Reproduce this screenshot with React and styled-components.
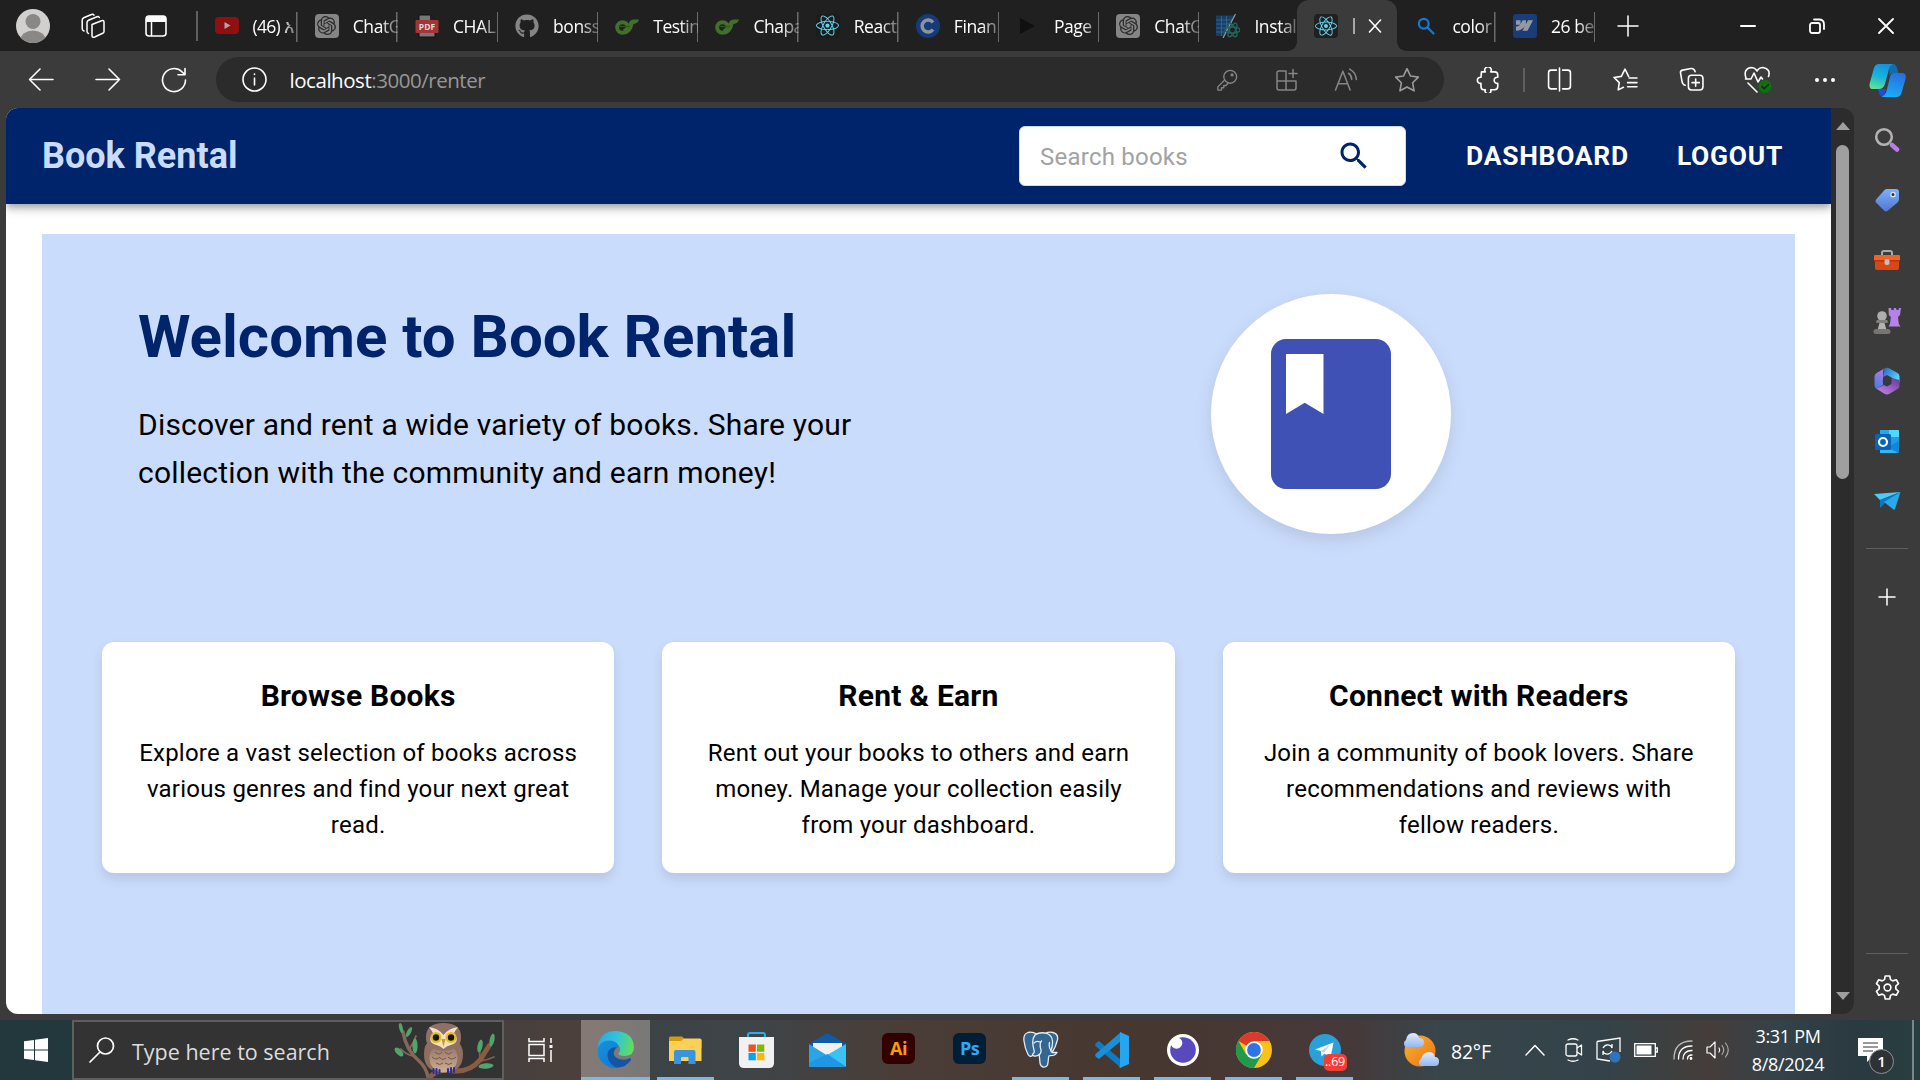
import React from "react";
import styled, { createGlobalStyle, css } from "styled-components";
import { FaReact, FaGithub } from "react-icons/fa";
import { SiOpenai, SiWebflow } from "react-icons/si";

const GlobalStyle = createGlobalStyle`
  * { box-sizing: border-box; }
  body { margin: 0; overflow: hidden; background: #3b3b3b; }
  h1, h2, p { margin: 0; }
  svg { display: block; flex: none; }
`;

const uiFont = `"Open Sans", "Noto Sans", sans-serif`;

const Screen = styled.div`
  width: 1920px;
  height: 1080px;
  display: flex;
  flex-direction: column;
  background: #3b3b3b;
  font-family: ${uiFont};
  overflow: hidden;
`;

/* ---------- title bar ---------- */
const TitleBar = styled.div`
  height: 51px;
  flex: none;
  display: flex;
  background: #202020;
  color: #fff;
`;
const Cell = styled.div`
  width: ${(p) => p.$w}px;
  height: ${(p) => (p.$h ? p.$h + "px" : "100%")};
  flex: none;
  display: flex;
  align-items: center;
  justify-content: ${(p) => (p.$end ? "flex-end" : "center")};
`;
const Tab = styled.div`
  width: ${(p) => p.$w || 100.3}px;
  height: 51px;
  flex: none;
  display: flex;
  align-items: center;
  padding-left: 17px;
  gap: 14px;
  ${(p) =>
    p.$line &&
    css`
      background: linear-gradient(#6b6b6b, #6b6b6b) right 0 top 12px / 1.5px 30px no-repeat;
    `}
`;
const Favicon = styled.div`
  width: 24px;
  height: 24px;
  flex: none;
  display: flex;
  align-items: center;
  justify-content: center;
  border-radius: ${(p) => p.$r || 0}px;
  background: ${(p) => p.$bg || "transparent"};
  color: ${(p) => p.$c || "#fff"};
`;
const TabLabel = styled.span`
  flex: 1;
  min-width: 0;
  white-space: nowrap;
  overflow: hidden;
  font-size: 17.5px;
  line-height: 26px;
  letter-spacing: ${(p) => p.$ls ?? -0.7}px;
  mask-image: linear-gradient(90deg, #000 calc(100% - 18px), rgba(0, 0, 0, 0.25));
`;
const ActiveTab = styled.div`
  width: 100px;
  height: 51px;
  flex: none;
  display: flex;
  align-items: center;
  background: #3b3b3b;
  border-radius: 12px 12px 0 0;
  padding-left: 17px;
  position: relative;
  &::before,
  &::after {
    content: "";
    position: absolute;
    bottom: 0;
    width: 9px;
    height: 9px;
  }
  &::before {
    left: -9px;
    background: radial-gradient(circle at 0 0, transparent 8.5px, #3b3b3b 9px);
  }
  &::after {
    right: -9px;
    background: radial-gradient(circle at 100% 0, transparent 8.5px, #3b3b3b 9px);
  }
`;
const ClippedLetter = styled.span`
  width: 2px;
  height: 16px;
  margin: 0 13px 0 15px;
  background: #a8a8a8;
`;
const Controls = styled.div`
  margin-left: auto;
  display: flex;
`;

/* ---------- toolbar ---------- */
const Toolbar = styled.div`
  height: 57px;
  flex: none;
  display: flex;
  align-items: center;
  padding-left: 8px;
  background: #3b3b3b;
`;
const AddressBar = styled.div`
  width: 1228px;
  height: 45px;
  margin: 0 11px 0 8px;
  border-radius: 23px;
  background: #2b2b2b;
  display: flex;
  align-items: center;
  padding: 0 7px 0 4px;
`;
const Url = styled.div`
  flex: 1;
  font-size: 20.5px;
  line-height: 30px;
  letter-spacing: -0.46px;
  color: #979797;
  b { font-weight: 400; color: #fff; }
`;
const Divider = styled.div`
  width: ${(p) => p.$w}px;
  height: ${(p) => p.$h}px;
  flex: none;
  background: #606060;
`;

/* ---------- body ---------- */
const Body = styled.div`
  height: 912px;
  flex: none;
  display: flex;
  padding-left: 6px;
`;
const Page = styled.main`
  width: 1825px;
  height: 906px;
  flex: none;
  overflow: hidden;
  border-radius: 12px 0 0 12px;
  background: #fff;
  font-family: Roboto, sans-serif;
`;
const ScrollTrack = styled.div`
  width: 23px;
  height: 906px;
  flex: none;
  background: #2c2c2c;
  border-radius: 0 12px 12px 0;
  display: flex;
  flex-direction: column;
  align-items: center;
  padding: 14px 0;
`;
const Arrow = styled.div`
  width: 0;
  height: 0;
  border: 7.5px solid transparent;
  ${(p) =>
    p.$down
      ? css`border-top: 8px solid #9f9f9f; border-bottom: 0; margin-top: auto;`
      : css`border-bottom: 8px solid #9f9f9f; border-top: 0;`}
`;
const Thumb = styled.div`
  width: 13px;
  height: 334px;
  margin-top: 15px;
  border-radius: 7px;
  background: #9f9f9f;
`;
const Sidebar = styled.aside`
  width: 66px;
  height: 912px;
  flex: none;
  display: flex;
  flex-direction: column;
  align-items: center;
  padding-top: 2px;
`;
const Spacer = styled.div`
  flex: 1;
`;

/* ---------- web app ---------- */
const AppHeader = styled.header`
  height: 96px;
  display: flex;
  align-items: center;
  padding: 0 48px 0 36px;
  background: #00246b;
  position: relative;
  box-shadow: 0 3px 6px -1.5px rgba(0, 0, 0, 0.2), 0 6px 7.5px rgba(0, 0, 0, 0.14),
    0 1.5px 15px rgba(0, 0, 0, 0.12);
`;
const Brand = styled.div`
  flex: 1;
  font-size: 36px;
  font-weight: 700;
  line-height: 48px;
  color: #cadcfc;
`;
const SearchBox = styled.div`
  width: 387px;
  height: 60px;
  display: flex;
  align-items: center;
  justify-content: space-between;
  padding: 0 33px 0 20px;
  background: #fff;
  border: 1.5px solid #cadcfc;
  border-radius: 6px;
  font-size: 24px;
  letter-spacing: 0.225px;
  color: #a2a2a2;
`;
const Placeholder = styled.span`
  padding-top: 2px;
`;
const NavLink = styled.div`
  margin-left: ${(p) => p.$ml}px;
  font-size: 26.4px;
  font-weight: 700;
  line-height: 48px;
  letter-spacing: 0.754px;
  color: #fff;
`;
const Hero = styled.section`
  height: 900px;
  margin: 30px 36px 0;
  padding: 60px;
  background: #cadcfc;
`;
const Intro = styled.div`
  display: grid;
  grid-template-columns: 825px 1fr;
  height: 348px;
`;
const IntroText = styled.div`
  padding: 7px 36px 0;
`;
const Heading = styled.h1`
  font-size: 60px;
  line-height: 72px;
  font-weight: 700;
  color: #00246b;
  margin-bottom: 28px;
`;
const Lead = styled.p`
  font-size: 30px;
  line-height: 48px;
  letter-spacing: 0.2px;
  color: #000;
`;
const Badge = styled.div`
  width: 240px;
  height: 240px;
  margin: 0 auto;
  border-radius: 50%;
  background: #fff;
  display: flex;
  align-items: center;
  justify-content: center;
  box-shadow: 0 6px 18px rgba(0, 0, 0, 0.1);
`;
const Cards = styled.div`
  display: grid;
  grid-template-columns: repeat(3, 1fr);
  gap: 48px;
`;
const Card = styled.article`
  height: 231px;
  padding: 30px 32px;
  border-radius: 12px;
  background: #fff;
  text-align: center;
  box-shadow: 0 6px 12px rgba(0, 0, 0, 0.1);
`;
const CardTitle = styled.h2`
  font-size: 30px;
  line-height: 48px;
  font-weight: 700;
  letter-spacing: 0.225px;
  margin-bottom: 15px;
`;
const CardText = styled.p`
  font-size: 24px;
  line-height: 36px;
  letter-spacing: 0.225px;
`;

/* ---------- taskbar ---------- */
const Taskbar = styled.footer`
  height: 60px;
  flex: none;
  display: flex;
  color: #fff;
  background: linear-gradient(
    90deg,
    #22383c 0,
    #22383c 72px,
    #48403e 520px,
    #4c403b 575px,
    #3c4346 660px,
    #3f4447 760px,
    #4a3d37 900px,
    #463730 1150px,
    #46393a 1350px,
    #38464b 1440px,
    #334349 1600px,
    #453d3a 1710px,
    #34424a 1780px,
    #2a3a40 1850px,
    #283e40 1920px
  );
`;
const TaskSearch = styled.div`
  width: 432px;
  height: 60px;
  flex: none;
  display: flex;
  align-items: center;
  border: 2px solid #5f5f5f;
  background: #333;
  padding-left: 15px;
  gap: 17px;
`;
const TaskSearchText = styled.span`
  flex: 1;
  font-size: 21.5px;
  line-height: 30px;
  letter-spacing: 0;
  padding-top: 3px;
  color: #dcdcdc;
  white-space: nowrap;
`;
const TaskItem = styled.div`
  width: ${(p) => (p.$active ? 69 : 71)}px;
  height: 60px;
  flex: none;
  display: flex;
  flex-direction: column;
  align-items: center;
  background: ${(p) => (p.$active ? "linear-gradient(90deg,#857a75,#787878)" : "none")};
`;
const TaskIcon = styled.div`
  height: 57px;
  display: flex;
  align-items: center;
  justify-content: center;
  padding-top: 2px;
  position: relative;
`;
const Underline = styled.div`
  width: ${(p) => (p.$wide ? "100%" : "57px")};
  height: 3px;
  background: ${(p) => (p.$on ? "#76b9ed" : "transparent")};
`;
const AdobeTile = styled.div`
  width: 33px;
  height: 31px;
  margin-bottom: 3px;
  border-radius: 6px;
  background: ${(p) => p.$bg};
  color: ${(p) => p.$c};
  font: 700 18px/30px ${uiFont};
  letter-spacing: -0.5px;
  text-align: center;
`;
const UnreadBadge = styled.div`
  position: absolute;
  left: 15px;
  top: 34px;
  width: 23px;
  height: 17px;
  border-radius: 5px;
  background: #f23c34;
  font-size: 12.5px;
  line-height: 16px;
  letter-spacing: -0.2px;
  text-align: center;
`;
const Tray = styled.div`
  margin-left: auto;
  display: flex;
  align-items: center;
`;
const Temp = styled.span`
  width: 66px;
  font-size: 19.5px;
  letter-spacing: -0.25px;
  padding: 3px 0 0 12px;
`;
const Clock = styled.div`
  width: 104px;
  display: flex;
  flex-direction: column;
  align-items: center;
  font-size: 18px;
  line-height: 28px;
  letter-spacing: -0.3px;
`;
const Notice = styled.div`
  width: 72px;
  height: 60px;
  display: flex;
  align-items: center;
  padding-left: 18px;
  position: relative;
`;
const NoticeCount = styled.div`
  position: absolute;
  left: 29px;
  top: 29px;
  width: 25px;
  height: 25px;
  border-radius: 50%;
  border: 1.5px solid #8d9295;
  background: #2e3234;
  font-size: 15px;
  font-weight: 600;
  line-height: 22px;
  text-align: center;
`;
const DesktopEdge = styled.div`
  width: 2px;
  height: 60px;
  margin-right: 6px;
  background: #7b8789;
`;

/* ---------- icons ---------- */
const Line = ({ w = 24, h = w, box = "0 0 24 24", c = "#fff", sw = 1.5, children }) => (
  <svg width={w} height={h} viewBox={box} fill="none" stroke={c} strokeWidth={sw} strokeLinecap="round" strokeLinejoin="round">
    {children}
  </svg>
);

const Avatar = () => (
  <svg width="34" height="34" viewBox="0 0 34 34">
    <defs><clipPath id="av"><circle cx="17" cy="17" r="17" /></clipPath></defs>
    <circle cx="17" cy="17" r="17" fill="#d2d0ce" />
    <g clipPath="url(#av)" fill="#8a8886"><circle cx="17" cy="12.5" r="7.5" /><ellipse cx="17" cy="31" rx="12.5" ry="9.5" /></g>
  </svg>
);
const Workspaces = () => (
  <Line w={26} box="0 0 26 26">
    <path d="M12 11.5l9.5-3.8q2.5-.7 2.5 1.5v9.3q0 1.2-1.3 1.8l-8 3.7q-2.7 1-2.7-1.5z" />
    <path d="M8.5 20.5q-1.500-.6-1.500-2.200V9.500q0-1.500 1.500-2.200L17 3.700q1.600-.5 2.300.8" />
    <path d="M4 18q-1.800-.6-1.800-2.300V7q0-1.500 1.500-2.200L11.500 1.500q1.800-.6 2.500.6" />
  </Line>
);
const VerticalTabs = () => (
  <svg width="22" height="22" viewBox="0 0 22 22">
    <rect x="1" y="1" width="20" height="20" rx="3" fill="none" stroke="#fff" strokeWidth="1.600" />
    <path d="M1 4q0-3 3-3h14q3 0 3 3v3H1z" fill="#fff" /><path d="M6.500 7v14" stroke="#fff" strokeWidth="1.500" />
  </svg>
);
const Youtube = () => (
  <svg width="24" height="17" viewBox="0 0 24 17"><rect width="24" height="17" rx="4" fill="#900f10" /><path d="M9.500 5v7l6-3.500z" fill="#a9a9a9" /></svg>
);
const Pdf = () => (
  <svg width="24" height="24" viewBox="0 0 24 24">
    <path d="M4 1h11l5 5v17H4z" fill="#777" stroke="#111" /><path d="M15 1v5h5z" fill="#222" />
    <rect x="0.500" y="6" width="23" height="13" rx="1" fill="#a73434" />
    <text x="12" y="16" fontSize="8.500" fontWeight="700" fill="#ddd" textAnchor="middle" fontFamily="Open Sans">PDF</text>
  </svg>
);
const ChapaMark = () => (
  <svg width="24" height="18" viewBox="0 0 24 18">
    <ellipse cx="7.500" cy="10.500" rx="5.300" ry="5.300" fill="none" stroke="#41702c" strokeWidth="4" />
    <path d="M8 12.500Q12 10.500 14 5.500 15.500 2.500 19 2.500h5Q23 6.500 18.500 7q-1.500 8-8 10.500z" fill="#41702c" />
    <path d="M5 9.500h10" stroke="#2f5420" strokeWidth="1.300" />
  </svg>
);
const TableReact = () => (
  <svg width="24" height="24" viewBox="0 0 24 24">
    <path d="M0 1.500h19L8 22H0z" fill="#173f66" />
    <path d="M0 6h16M0 10h14M0 14h12M0 18h10M5.500 2v20M10.500 2v16" stroke="#38648c" strokeWidth="0.900" />
    <path d="M19.500 0L7 24" stroke="#999" strokeWidth="1.200" />
    <g fill="none" stroke="#20665c" strokeWidth="1.400"><ellipse cx="16.500" cy="16" rx="7.500" ry="3" /><ellipse cx="16.500" cy="16" rx="7.500" ry="3" transform="rotate(60 16.500 16)" /><ellipse cx="16.500" cy="16" rx="7.500" ry="3" transform="rotate(120 16.500 16)" /></g>
  </svg>
);
const BigC = () => (
  <svg width="24" height="24" viewBox="0 0 24 24"><circle cx="12" cy="12" r="12" fill="#163b78" /><path d="M17 8.500A6 6 0 1 0 17 15.500" fill="none" stroke="#8e949c" strokeWidth="3.500" /></svg>
);
const BookIcon = () => (
  <svg width="180" height="180" viewBox="0 0 24 24" fill="#3f51b5">
    <path d="M18 2H6c-1.100 0-2 .9-2 2v16c0 1.100.9 2 2 2h12c1.100 0 2-.9 2-2V4c0-1.100-.9-2-2-2zM6 4h5v8l-2.500-1.500L6 12V4z" />
  </svg>
);
const SearchIcon = () => (
  <svg width="36" height="36" viewBox="0 0 24 24" fill="#00246b">
    <path d="M15.500 14h-.79l-.28-.27C15.410 12.590 16 11.110 16 9.500 16 5.910 13.090 3 9.500 3S3 5.910 3 9.500 5.910 16 9.500 16c1.610 0 3.090-.59 4.230-1.570l.27.28v.79l5 4.990L20.490 19l-4.990-5zm-6 0C7.010 14 5 11.990 5 9.500S7.010 5 9.500 5 14 7.010 14 9.500 11.990 14 9.500 14z" />
  </svg>
);
const Copilot = () => (
  <svg width="37" height="34" viewBox="0 0 37 34">
    <defs>
      <linearGradient id="cpA" x1="0.500" y1="0" x2="0.200" y2="1"><stop offset="0" stopColor="#1693e0" /><stop offset=".5" stopColor="#18b6d8" /><stop offset="1" stopColor="#67e38b" /></linearGradient>
      <linearGradient id="cpB" x1="0.600" y1="0" x2="0.300" y2="1"><stop offset="0" stopColor="#2a6fdc" /><stop offset="1" stopColor="#18aef8" /></linearGradient>
    </defs>
    <path d="M20 1h4q3 0 4 4l1.500 5h-6q-2 0-3 3z" fill="#0f6fae" />
    <path d="M9 26h8l-2 7q-4 1-5-3z" fill="#1f4fd8" />
    <path d="M10 1h14q-3 1-4 5l-4 15q-1.500 5-6 5H4Q-.5 26 .8 20L5 5Q6.300 1 10 1z" fill="url(#cpA)" />
    <path d="M25 10h8q5 0 3.500 6l-4 14q-1.200 4-5 4H12q4-1 5.500-6l3.500-14q1-4 4-4z" fill="url(#cpB)" />
  </svg>
);
const Gear = () => (
  <Line w={27} sw={1.450}>
    <circle cx="12" cy="12" r="3" />
    <path d="M10 1.800h4l.7 3.200 2 1.100 3.100-1 2 3.400-2.400 2.200v2.600l2.400 2.200-2 3.400-3.100-1-2 1.100-.7 3.200h-4L9.300 19l-2-1.100-3.100 1-2-3.400 2.400-2.200v-2.600L2.200 8.500l2-3.400 3.100 1 2-1.100z" />
  </Line>
);
const Magnify = () => (
  <svg width="26" height="26" viewBox="0 0 26 26"><circle cx="10" cy="10" r="7.800" fill="none" stroke="#b5b3b1" strokeWidth="2.600" /><path d="M15.500 15.500l3 3" stroke="#99918f" strokeWidth="2" /><path d="M18 18l5 4.500" stroke="#b77ee8" strokeWidth="4.500" strokeLinecap="round" /></svg>
);
const Tag = () => (
  <svg width="26" height="26" viewBox="0 0 26 26">
    <defs><linearGradient id="tg" x1="0" y1="0" x2="0" y2="1"><stop offset="0" stopColor="#7db0fa" /><stop offset="1" stopColor="#5277cf" /></linearGradient></defs>
    <path d="M13 2h9q3 0 3 3v7q0 2-1.500 3.500L14 23.500q-2 1.800-4 0L2.500 16q-2-2 0-4L10.500 3q1-1 2.500-1z" fill="url(#tg)" /><circle cx="19" cy="7.500" r="2.200" fill="#333" stroke="#dce8fa" strokeWidth="1.300" />
  </svg>
);
const Toolbox = () => (
  <svg width="28" height="22" viewBox="0 0 28 22"><path d="M9 6V4q0-2 2-2h6q2 0 2 2v2" fill="none" stroke="#aaa" strokeWidth="2" /><rect x="2" y="9" width="24" height="12" rx="2" fill="#d94714" /><rect x="1" y="6" width="26" height="6" rx="1" fill="#f06427" /><rect x="1" y="11" width="26" height="1.500" fill="#b8360a" /><rect x="11.500" y="10" width="5" height="6" rx="2" fill="#c4c0bd" /></svg>
);
const Chess = () => (
  <svg width="28" height="28" viewBox="0 0 28 28">
    <path d="M15.500 1l2.500 0 .5 2h2l.5-2h2l.5 2h2l.5-2 2 0-1 7-2 2 .8 7 1.700 2.500H15.500l1.500-2.500.8-7-2-2z" fill="#b583e8" />
    <circle cx="9" cy="9" r="4.800" fill="#b0aeac" /><rect x="3" y="13" width="12" height="3" rx="1.500" fill="#817f7d" /><path d="M6.500 16h5l2 7h-9z" fill="#b5b3b1" /><rect x="0.500" y="22" width="17" height="5" rx="2.500" fill="#777573" />
  </svg>
);
const M365 = () => (
  <svg width="26" height="28" viewBox="0 0 26 28">
    <defs>
      <linearGradient id="mA" x1="0" y1="0" x2="1" y2="0.600"><stop offset="0" stopColor="#2b5fc2" /><stop offset="1" stopColor="#55d8fa" /></linearGradient>
      <linearGradient id="mB" x1="0.300" y1="0" x2="0" y2="1"><stop offset="0" stopColor="#a77be6" /><stop offset="1" stopColor="#3b7fe0" /></linearGradient>
      <linearGradient id="mC" x1="1" y1="0" x2="0" y2="1"><stop offset="0" stopColor="#6a3596" /><stop offset="1" stopColor="#c98af0" /></linearGradient>
    </defs>
    <path d="M10.500 1.500q2.500-1.500 5 0l8 4.500q2 1.200 2 3.500v6l-8-5-4.500-2.500L9 10z" fill="url(#mA)" />
    <path d="M10.500 1.500q-1.500 1-1.500 4V18l-6.500 3.800Q.5 20.500.5 18.500v-9Q.5 7.200 2.500 6z" fill="url(#mB)" />
    <path d="M25.500 13v5.500q0 2.300-2 3.500l-8 4.800q-2.500 1.400-5 0l-8-5L10 18l3 1.500 4.500-2.500v-6z" fill="url(#mC)" />
    <circle cx="13" cy="14" r="4.300" fill="#363842" />
  </svg>
);
const Outlook = () => (
  <svg width="26" height="25" viewBox="0 0 26 25"><rect x="6" y="1" width="19" height="22" rx="1.500" fill="#1f9ce8" /><path d="M6 1h9v6H6z" fill="#28a8ea" /><path d="M15 1h9q1 0 1 1v6H15z" fill="#50d9ff" /><path d="M25 12L14 18l11 6z" fill="#1487d4" /><path d="M6 16l8 4 11 4H6z" fill="#35b8f1" /><rect x="1" y="5" width="16" height="16" rx="1.500" fill="#0a63b8" /><circle cx="9" cy="13" r="4" fill="none" stroke="#fff" strokeWidth="2.200" /></svg>
);
const Plane = () => (
  <svg width="27" height="20" viewBox="0 0 27 20"><path d="M26.500 1L0 3l6 6z" fill="#49cdf6" /><path d="M26.500 1L6 9v8l5-5z" fill="#1275c4" /><path d="M26.500 1L10 11l9.500 7.500q1 .5 1.500-.5z" fill="#2aa9ea" /></svg>
);
const Owl = () => (
  <svg width="104" height="56" viewBox="0 0 104 56">
    <defs><linearGradient id="owl" x1="0" y1="0" x2="0" y2="1"><stop offset="0" stopColor="#8f7064" /><stop offset="1" stopColor="#cdb094" /></linearGradient></defs>
    <g fill="none" stroke="#87675c" strokeLinecap="round">
      <path d="M34 55Q32 45 25 39 12 28 9 10" strokeWidth="3.500" /><path d="M20 34Q12 33 7 27M16 26Q20 20 22 14" strokeWidth="1.800" />
      <path d="M36 55Q44 46 60 49 76 50 86 38L95 24" strokeWidth="5" stroke="#8b5c43" /><path d="M86 39Q94 38 100 35M86 36Q85 30 87 26" strokeWidth="1.800" stroke="#8b5c43" />
    </g>
    <g fill="#51a56a"><ellipse cx="7" cy="6" rx="1.800" ry="5" transform="rotate(-14 7 6)" /><ellipse cx="15" cy="10" rx="2" ry="5.500" transform="rotate(28 15 10)" /><ellipse cx="5" cy="30" rx="2.800" ry="5.500" transform="rotate(-45 5 30)" /><ellipse cx="21" cy="24" rx="2.600" ry="7.500" /><ellipse cx="86" cy="24" rx="2.500" ry="6.500" transform="rotate(12 86 24)" /><ellipse cx="98" cy="18" rx="2.400" ry="6.500" transform="rotate(12 98 18)" /><ellipse cx="92" cy="44" rx="7.500" ry="2.700" transform="rotate(-5 92 44)" /></g>
    <path d="M30 32Q30 22 36 18h26q7 5 7 14 0 15-13 18H43Q30 47 30 32z" fill="#8e6f61" /><ellipse cx="49.500" cy="36" rx="14" ry="14.500" fill="url(#owl)" />
    <path d="M32 15Q32 1 49.500 1T67 15q1 12-17.500 14Q31 27 32 15z" fill="#8f7069" />
    <path d="M35 5q9 1 14.500 8Q55 6 64 5q-3 4-4 6 7 9-3.500 12-4 1-7 4-3-3-7-4Q32 20 39 11q-1-2-4-6z" fill="#f5dfc0" />
    <circle cx="42" cy="15.500" r="5.500" fill="#e4be1d" /><circle cx="57" cy="15.500" r="5.500" fill="#e4be1d" /><circle cx="42" cy="15.500" r="3.200" fill="#171717" /><circle cx="57" cy="15.500" r="3.200" fill="#171717" /><path d="M47.500 17h4L49.500 25z" fill="#c79a2a" />
    <path d="M41 30q4 4 7 0M51 30q4 4 7 0M38 35q4 4 8 0M46 36q3 3 6 0M54 35q4 4 8 0M42 41q4 3 7 0M51 41q4 3 7 0" fill="none" stroke="#76574a" strokeWidth="1" />
    <path d="M39.500 47v4M42.500 47v5M45.500 48v3M54 47v4M57 46v5M60 46v4" stroke="#2a2c9e" strokeWidth="2" strokeLinecap="round" />
  </svg>
);
const Edge = () => (
  <svg width="37" height="37" viewBox="0 0 37 37">
    <defs>
      <linearGradient id="eA" x1="0" y1="0.300" x2="1" y2="0.500"><stop offset="0" stopColor="#28a9e8" /><stop offset=".5" stopColor="#2fc5da" /><stop offset="1" stopColor="#63de58" /></linearGradient>
      <linearGradient id="eB" x1="0" y1="0" x2="0.700" y2="1"><stop offset="0" stopColor="#1692d8" /><stop offset="1" stopColor="#0f7bd8" /></linearGradient>
    </defs>
    <path d="M.5 16Q3 0 19 0q17 1 18 16 0 8.500-9 9-7 0-6.500-3 3-3 .5-7-4-6-12-4-5 1-9.500 5z" fill="url(#eA)" />
    <path d="M.5 19Q2 9.500 13 9.500q8 .5 8.500 7-7 1-6.500 8 1 8 8 11.500-5 2-11 0Q.5 31 .5 19z" fill="url(#eB)" />
    <path d="M15 17Q10 19 10.500 25q1 8 9 11.500 9 .5 14.500-7.500.5-2.500-2-1.500-7 3-13-1-5-4 .500-10-2-.5-4.500.5z" fill="#1256a5" />
  </svg>
);
const Elephant = () => (
  <svg width="36" height="37" viewBox="0 0 36 37" fill="#336791" stroke="#e6edf2" strokeWidth="1.300" strokeLinejoin="round" strokeLinecap="round">
    <path d="M14 3Q9 .5 5 1.500 0 3 1 10q1 8 4 13.500 2 3.500 5 .5l3-4z" />
    <path d="M22 2.500q4-2 8-1 5.500 1.500 4.500 7Q33 16 28 23z" />
    <path d="M12 4q5-3.500 12-1.500 5 2 5.500 7.500.3 5-1.500 9-.5 2 1.500 2.500l4.500 0q-2 3.500-7 3.200-1.500 0-1.500 2-.3 5-1 7.300Q23.500 36.500 20 36q-2.500-.5-3-4l-.8-8.500q-2 2-5 1.500-3-.8-.5-3 1-1 .3-3Q8 9 12 4z" />
    <path d="M16.500 23.500Q19 21 17.500 17q-1-5 1-7M28 19.500q-2.500-3.500-1.500-8M11 12q2.500-2.500 6-1" fill="none" />
  </svg>
);
const Folder = () => (
  <svg width="33" height="28" viewBox="0 0 33 28"><path d="M0 2q0-1.500 1.500-1.500H13l2.500 2.500H31q1.500 0 1.500 1.500V12H0z" fill="#d99a08" /><path d="M0 5h12l3-2.500h16q1.500 0 1.500 1.500v21H0z" fill="#fccf55" /><path d="M5 28V16q0-2 2-2h17.500q2 0 2 2v12h-7v-6q0-1-1-1h-5.500q-1 0-1 1v6z" fill="#3a93dd" /></svg>
);
const Store = () => (
  <svg width="35" height="36" viewBox="0 0 35 36"><path d="M9 7V3q0-2 2-2h13q2 0 2 2v4" fill="none" stroke="#28aee8" strokeWidth="2" /><path d="M0 5h35v26q0 5-5 5H5q-5 0-5-5z" fill="#f1f1f1" /><path d="M9.500 12.500h7.300v7.300H9.500z" fill="#f25022" /><path d="M18 12.500h7.300v7.300H18z" fill="#7fba00" /><path d="M9.500 21h7.300v7.300H9.500z" fill="#00a4ef" /><path d="M18 21h7.300v7.300H18z" fill="#ffb900" /></svg>
);
const Mail = () => (
  <svg width="37" height="34" viewBox="0 0 37 34"><path d="M0 11L18.500 0 37 11v6H0z" fill="#0f5ba9" /><path d="M4 10h29v10L19 26 4 18z" fill="#f1f1f1" /><path d="M0 11l19 12-19 11z" fill="#2aa5e8" /><path d="M37 11v23L18 22z" fill="#38c3f3" /><path d="M0 34h37L18.500 21 0 30z" fill="#1f97e4" /></svg>
);
const VsCode = () => (
  <svg width="36" height="36" viewBox="0 0 36 36"><path d="M2 11l3-2 22 19v8L1.500 14q-1-1.500.5-3z" fill="#0d7cc4" /><path d="M1.500 22L27 0v9L5 27l-3-2q-1.500-1.500-.5-3z" fill="#1b8fd6" /><path d="M26 0l9 4v28l-9 4q-1 0 0-3z" fill="#26a5f0" /></svg>
);
const PurpleOrb = () => (
  <svg width="32" height="32" viewBox="0 0 32 32"><circle cx="16" cy="16" r="16" fill="#fff" /><circle cx="16" cy="16" r="12.800" fill="#5849be" /><circle cx="9.500" cy="9" r="5.800" fill="#fff" /></svg>
);
const Chrome = () => (
  <svg width="36" height="36" viewBox="0 0 36 36"><circle cx="18" cy="18" r="18" fill="#fbc116" /><path d="M18 18L2.400 9A18 18 0 0 1 33.600 9H18z" fill="#db3a2d" /><path d="M2.400 9A18 18 0 0 0 18 36l7.800-13.500L18 18 10.200 22.500z" fill="#219b49" /><circle cx="18" cy="18" r="8.700" fill="#fff" /><circle cx="18" cy="18" r="6.900" fill="#2e73e8" /></svg>
);
const Telegram = () => (
  <svg width="32" height="32" viewBox="0 0 32 32"><circle cx="16" cy="16" r="16" fill="#2a9fd8" /><path d="M6 15.500L24.500 8.500 21.500 24l-6-4.500-3 3-.7-5.500z" fill="#fff" /><path d="M11.800 17l9-6-6 8z" fill="#b9d9ea" /></svg>
);
const Weather = () => (
  <svg width="37" height="36" viewBox="0 0 37 36">
    <defs><linearGradient id="sun" x1="0" y1="0" x2="1" y2="1"><stop offset="0" stopColor="#f5b62f" /><stop offset="1" stopColor="#ee7016" /></linearGradient><linearGradient id="cl" x1="0" y1="0" x2="0" y2="1"><stop offset="0" stopColor="#e2ebfb" /><stop offset="1" stopColor="#94b8f2" /></linearGradient></defs>
    <circle cx="18" cy="19" r="15.500" fill="url(#sun)" /><path d="M4 15a4 4 0 0 1 0-7Q5 1 11 1q5 0 6 5 5 0 5 4.500T17 15z" fill="url(#cl)" /><path d="M19 34a4 4 0 0 1 0-7q2-7 8-7 5 0 6 5 4 0 4 4.500T33 34z" fill="url(#cl)" />
  </svg>
);

const tabs = [
  ["(46) አ", <Youtube />, {}],
  ["ChatG", <SiOpenai size={19} />, { $bg: "#858585", $c: "#2a2a2a", $r: 4 }, -0.4],
  ["CHAL", <Pdf />, {}, -0.4],
  ["bonss", <FaGithub size={24} />, { $c: "#858585" }, -0.4],
  ["Testin", <ChapaMark />, {}, -0.5],
  ["Chapa", <ChapaMark />, {}, -0.5],
  ["React", <FaReact size={23} />, { $c: "#61d5f3", $bg: "#1c1c1c", $r: 4 }, -0.4],
  ["Finan", <BigC />, {}, -0.4],
  ["Page", <svg width="16" height="18"><path d="M0 1v16l15-8z" fill="#101010" /></svg>, {}, -0.5],
  ["ChatG", <SiOpenai size={19} />, { $bg: "#858585", $c: "#2a2a2a", $r: 4 }, -0.4],
  ["Instal", <TableReact />, {}, -0.4],
];

const taskItems = [
  [<Folder />, true],
  [<Store />, false],
  [<Mail />, false],
  [<AdobeTile $bg="#330000" $c="#ff9a00">Ai</AdobeTile>, false],
  [<AdobeTile $bg="#001e36" $c="#31a8ff">Ps</AdobeTile>, false],
  [<Elephant />, true],
  [<VsCode />, true],
  [<PurpleOrb />, true],
  [<Chrome />, true],
  [<><Telegram /><UnreadBadge>..69</UnreadBadge></>, true],
];

const cards = [
  ["Browse Books", "Explore a vast selection of books across various genres and find your next great read."],
  ["Rent & Earn", "Rent out your books to others and earn money. Manage your collection easily from your dashboard."],
  ["Connect with Readers", "Join a community of book lovers. Share recommendations and reviews with fellow readers."],
];

const BrowserTabs = () => (
  <TitleBar>
    <Cell $w={66}><Avatar /></Cell>
    <Cell $w={54}><Workspaces /></Cell>
    <Cell $w={72}><VerticalTabs /></Cell>
    <Cell $w={5.5} $end><Divider $w={1.5} $h={30} /></Cell>
    {tabs.map(([label, icon, fav, ls], i) => (
      <Tab key={i} $line={i < 10} $w={i < 10 ? 100.2 : 98}>
        <Favicon {...fav}>{icon}</Favicon>
        <TabLabel $ls={ls}>{label}</TabLabel>
      </Tab>
    ))}
    <ActiveTab>
      <Favicon $bg="#202020" $c="#61d5f3" $r={4}><FaReact size={22} /></Favicon>
      <ClippedLetter />
      <Line w={14} box="0 0 14 14" sw={1.6}><path d="M1.500 1l11 12M12.500 1l-11 12" /></Line>
    </ActiveTab>
    <Tab $w={98.5} $line>
      <Favicon><Line w={18} c="#1479d4" sw={3}><circle cx="9" cy="9" r="6.500" /><path d="M14 14l8 8" /></Line></Favicon>
      <TabLabel $ls={-0.4}>color</TabLabel>
    </Tab>
    <Tab $w={99.5} $line>
      <Favicon $bg="#1a3c78" $c="#95999f" $r={3}><SiWebflow size={17} /></Favicon>
      <TabLabel $ls={-0.4}>26 be</TabLabel>
    </Tab>
    <Cell $w={66}><Line w={22} box="0 0 22 22"><path d="M11 1v20M1 11h20" /></Line></Cell>
    <Controls>
      <Cell $w={69}><Line w={16} box="0 0 16 16" sw={2}><path d="M1 8h14" /></Line></Cell>
      <Cell $w={69}><Line w={16} box="0 0 16 16" sw={1.8}><rect x="1" y="5" width="10" height="10" rx="2" /><path d="M5 1.500h5q5 0 5 5V11" /></Line></Cell>
      <Cell $w={69}><Line w={16} box="0 0 16 16" sw={1.8}><path d="M1 1l14 14M15 1L1 15" /></Line></Cell>
    </Controls>
  </TitleBar>
);

const BrowserToolbar = () => (
  <Toolbar>
    <Cell $w={66.5}><Line w={26} box="0 0 26 26" sw={1.6}><path d="M25 12.500H1.500M12 2L1.500 12.500 12 23" /></Line></Cell>
    <Cell $w={66.5}><Line w={26} box="0 0 26 26" sw={1.6}><path d="M1 12.500h23.500M14 2l10.500 10.500L14 23" /></Line></Cell>
    <Cell $w={66.5}><Line w={26} box="0 0 26 26" sw={1.6}><path d="M24.500 13A11.500 11.500 0 1 1 21 4.800L24 7.500M24 1.500v6.300h-7" /></Line></Cell>
    <AddressBar>
      <Cell $w={70}><Line w={25} box="0 0 25 25" sw={1.6}><circle cx="12.500" cy="12.500" r="11.500" /><path d="M12.500 11v7M12.500 7v.4" /></Line></Cell>
      <Url><b>localhost</b>:3000/renter</Url>
      <Cell $w={60}><Line w={22} c="#858585"><circle cx="15.500" cy="8.500" r="7" /><circle cx="17.500" cy="6.500" r="1" /><path d="M9.500 12L2 19.500V23h4v-2.500h2.500V18H11l2-2.500" /></Line></Cell>
      <Cell $w={60}><Line w={24} c="#858585"><path d="M11 3H4Q2 3 2 5v15q0 2 2 2h15q2 0 2-2v-7H2M11 3v19M18 1.500v8M14 5.500h8" /></Line></Cell>
      <Cell $w={60}><Line w={25} c="#858585"><path d="M1.500 22L8.500 4l7 18M4 16h9M14 6q3 2 3 6M15 2q6 3 6.500 10" /></Line></Cell>
      <Cell $w={60}><Line w={26} c="#9a9a9a"><path d="M12 1.500l3.200 6.800 7.300 1-5.300 5.200 1.300 7.500L12 18.400 5.500 22l1.300-7.500L1.500 9.300l7.300-1z" /></Line></Cell>
    </AddressBar>
    <Cell $w={66}><Line w={26}><path d="M6 4.500h3.500a3 3 0 1 1 5 0H18q3 0 3 3V9.500a2.800 2.800 0 1 0 0 5.500v3q0 3-3 3h-3.500a2.700 2.700 0 1 1-5 0H8q-2.500 0-2.500-3v-3a2.800 2.800 0 1 1 0-5.500z" /></Line></Cell>
    <Cell $w={6}><Divider $w={2} $h={24} /></Cell>
    <Cell $w={66}><Line w={25}><path d="M9 3H4Q1.500 3 1.500 5.500v13Q1.500 21 4 21h5M15 3h5q2.500 0 2.500 2.500v13Q22.500 21 20 21h-5M12 1v22" /></Line></Cell>
    <Cell $w={66}><Line w={25}><path d="M14 15H23M14 19h9M15.500 10.500H23M10 19.500L5 22l1-7L1 10l7-1 3.500-7L15 9" /></Line></Cell>
    <Cell $w={66}><Line w={25}><rect x="9" y="8" width="14" height="14" rx="3" /><path d="M16 11.500v7M12.500 15h7M6 17.500q-2 0-3-3L1.500 6Q1 3.500 3.500 3l8-1.500q3-.5 4 3" /></Line></Cell>
    <Cell $w={67}>
      <Line w={28} box="0 0 28 28" sw={1.6}><path d="M2 12Q-1 3 7 1.500q4 0 6 3.500 2-3.500 6-3.500 8 1.500 5.500 9M1.500 13H7l3-6 4 9 3-5 1.500 2M4 17l9 9" /><circle cx="21" cy="20.500" r="6.500" fill="#0e700e" stroke="none" /><path d="M18 20.500l2.200 2.200 4-4" stroke="#112b11" /></Line>
    </Cell>
    <Cell $w={66}><svg width="22" height="6"><circle cx="3" cy="3" r="2" fill="#fff" /><circle cx="11" cy="3" r="2" fill="#fff" /><circle cx="19" cy="3" r="2" fill="#fff" /></svg></Cell>
    <Cell $w={60}><Copilot /></Cell>
  </Toolbar>
);

const Rental = () => (
  <Page>
    <AppHeader>
      <Brand>Book Rental</Brand>
      <SearchBox><Placeholder>Search books</Placeholder><SearchIcon /></SearchBox>
      <NavLink $ml={60}>DASHBOARD</NavLink>
      <NavLink $ml={48}>LOGOUT</NavLink>
    </AppHeader>
    <Hero>
      <Intro>
        <IntroText>
          <Heading>Welcome to Book Rental</Heading>
          <Lead>Discover and rent a wide variety of books. Share your collection with the community and earn money!</Lead>
        </IntroText>
        <Badge><BookIcon /></Badge>
      </Intro>
      <Cards>
        {cards.map(([title, text]) => (
          <Card key={title}><CardTitle>{title}</CardTitle><CardText>{text}</CardText></Card>
        ))}
      </Cards>
    </Hero>
  </Page>
);

const EdgeSidebar = () => (
  <Sidebar>
    {[<Magnify />, <Tag />, <Toolbox />, <Chess />, <M365 />, <Outlook />, <Plane />].map((icon, i) => (
      <Cell key={i} $w={60} $h={60.2}>{icon}</Cell>
    ))}
    <Cell $w={60} $h={35}><Divider $w={42} $h={1} /></Cell>
    <Cell $w={60} $h={62}><Line w={18} box="0 0 18 18"><path d="M9 1v16M1 9h16" /></Line></Cell>
    <Spacer />
    <Divider $w={42} $h={1} />
    <Cell $w={60} $h={66}><Gear /></Cell>
  </Sidebar>
);

const WindowsTaskbar = () => (
  <Taskbar>
    <Cell $w={72}><svg width="24" height="24" viewBox="0 0 24 24" fill="#fff"><path d="M0 3.300L10 2v9.500H0zM11 1.800L24 0v11.500H11zM0 12.500h10V22L0 20.700zM11 12.500h13V24l-13-1.800z" /></svg></Cell>
    <TaskSearch>
      <Line w={26} box="0 0 26 26" sw={1.7}><circle cx="16.500" cy="9" r="8" /><path d="M11 15L1 25" /></Line>
      <TaskSearchText>Type here to search</TaskSearchText>
      <Cell $w={112}><Owl /></Cell>
    </TaskSearch>
    <Cell $w={73}>
      <svg width="26" height="24" viewBox="0 0 26 24" fill="none" stroke="#fff" strokeWidth="1.500"><path d="M1 0v3.500h15V0M1 24v-3.500h15V24M1 6.500h15v11H1zM23 0v5M23 12v12" /><path d="M21.500 7h3v3h-3z" fill="#fff" stroke="none" /></svg>
    </Cell>
    <Cell $w={4} />
    <TaskItem $active><TaskIcon><Edge /></TaskIcon><Underline $on $wide /></TaskItem>
    {taskItems.map(([icon, on], i) => (
      <TaskItem key={i}><TaskIcon>{icon}</TaskIcon><Underline $on={on} /></TaskItem>
    ))}
    <Tray>
      <Weather />
      <Temp>82°F</Temp>
      <Cell $w={60}><Line w={20} box="0 0 20 12" h={12}><path d="M1 11l9-9.500 9 9.500" /></Line></Cell>
      <Cell $w={18}><Line w={18} h={24} box="0 0 18 24" sw={1.3}><rect x="1" y="6" width="11" height="12" rx="2" /><path d="M12 10l4.500-3v10L12 14M3 2q5-2.500 10 0M3 22q5 2.500 10 0" /></Line></Cell>
      <Cell $w={51}><svg width="26" height="26" viewBox="0 0 26 26" fill="none" stroke="#fff" strokeWidth="1.300"><path d="M1 4.500L24 1v14M1 4.500V22l13 2M7 11q3-5 8-2l1 2v-4M16 14q-3 5-8 2l-1-2v4" /><circle cx="19" cy="20" r="5.500" fill="#2f72bd" stroke="none" /></svg></Cell>
      <Cell $w={24}><svg width="24" height="14" viewBox="0 0 24 14"><path d="M.7.700h20.600v12.600H.7zM21.300 5h2v4h-2" fill="none" stroke="#fff" strokeWidth="1.300" /><path d="M2.500 2.500h15v9h-15z" fill="#fff" /></svg></Cell>
      <Cell $w={49}><Line w={20} box="0 0 20 20" sw={1.3}><path d="M1 19Q1 1 19 1" opacity=".65" /><path d="M5.500 19Q5.500 6 19 6M10 19q0-8.500 9-8.500M14.500 19q0-4 4.500-4" /><circle cx="18" cy="18.500" r=".8" fill="#fff" /></Line></Cell>
      <Cell $w={22}><Line w={24} h={20} box="0 0 24 20" sw={1.2}><path d="M1 7h3l5-5v16l-5-5H1zM13 8q1.500 2 0 4" /><path d="M16 5.500q3.500 4.500 0 9M19.500 3q5.500 7 0 14" opacity=".55" /></Line></Cell>
      <Cell $w={7} />
      <Clock><span>3:31 PM</span><span>8/8/2024</span></Clock>
      <Notice>
        <svg width="25" height="24" viewBox="0 0 25 24"><path d="M0 0h25v18H15l-6 6v-6H0z" fill="#fff" /><path d="M5 5h15M5 9h15M5 13h10" stroke="#333" strokeWidth="1" /></svg>
        <NoticeCount>1</NoticeCount>
      </Notice>
      <DesktopEdge />
    </Tray>
  </Taskbar>
);

export default function App() {
  return (
    <Screen>
      <GlobalStyle />
      <BrowserTabs />
      <BrowserToolbar />
      <Body>
        <Rental />
        <ScrollTrack><Arrow /><Thumb /><Arrow $down /></ScrollTrack>
        <EdgeSidebar />
      </Body>
      <WindowsTaskbar />
    </Screen>
  );
}
